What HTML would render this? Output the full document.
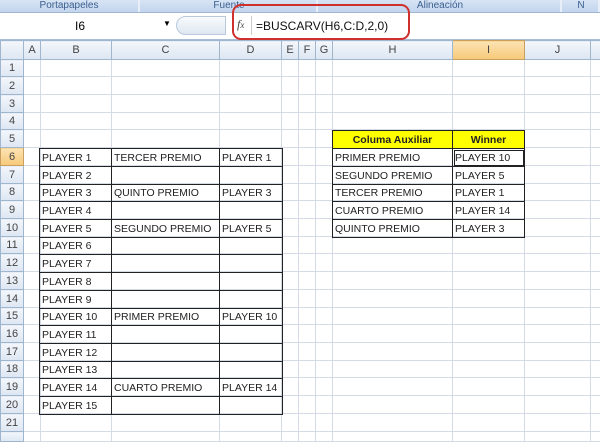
<!DOCTYPE html>
<html><head><style>
*{margin:0;padding:0;box-sizing:border-box}
body{width:600px;height:438px;overflow:hidden;background:#fff;font-family:"Liberation Sans",sans-serif;position:relative}
.rib{position:absolute;left:0;top:0;width:600px;height:13px;background:linear-gradient(#d7e4f4,#c2d5ee);border-bottom:1px solid #9fb5d2}
.grp{position:absolute;top:0;height:12px;font-size:10px;color:#3b5f8f;text-align:center;line-height:11px;border-right:2px solid #e8eff9}
.fb{position:absolute;left:0;top:13px;width:600px;height:27px;background:#fff;border-bottom:1px solid #a8bcd6}
table{border-collapse:collapse;table-layout:fixed;position:absolute}
.g td{border:1px solid #d4dbe7;font-size:11px;padding:0 2px;white-space:nowrap;overflow:hidden}
.g td.h{background:linear-gradient(#f3f6fb,#dde6f2);border-color:#9eb6ce;color:#444;text-align:center;font-size:11px}
.g td.sel{background:linear-gradient(#fbe3b4,#f7c978);border-color:#c9a060}
.t td{border:1px solid #222;font-size:10.5px;padding:0 2px;white-space:nowrap;overflow:hidden;color:#222;line-height:14px}
</style></head><body>
<div class="rib">
<div class="grp" style="left:0;width:140px">Portapapeles</div>
<div class="grp" style="left:142px;width:176px">Fuente</div>
<div class="grp" style="left:320px;width:242px">Alineación</div>
<div class="grp" style="left:564px;width:36px">N</div>
</div>
<div class="fb">
<div style="position:absolute;left:75px;top:6px;font-size:12px">I6</div>
<div style="position:absolute;left:163px;top:6px;font-size:8px">▼</div>
<div style="position:absolute;left:176px;top:3px;width:50px;height:19px;border:1px solid #b8c8dc;border-radius:10px 0 0 10px;background:linear-gradient(#f8fafd,#dfe7f1)"></div>
<div style="position:absolute;left:237px;top:4px;font-size:12px;font-style:italic;font-family:'Liberation Serif',serif;color:#444">f<span style="font-size:9px">x</span></div>
<div style="position:absolute;left:251px;top:3px;width:1px;height:19px;background:#ccc"></div>
<div style="position:absolute;left:256px;top:6px;font-size:12px;color:#111">=BUSCARV(H6,C:D,2,0)</div>
</div>
<div style="position:absolute;left:232px;top:4px;width:178px;height:36px;border:2px solid #d0302c;border-radius:9px"></div>

<table class="g" style="left:0;top:40px;width:600px">
<colgroup><col style="width:23px"><col style="width:17px"><col style="width:71px"><col style="width:108px"><col style="width:62px"><col style="width:17px"><col style="width:17px"><col style="width:17px"><col style="width:120px"><col style="width:72px"><col style="width:66px"><col style="width:10px"></colgroup>
<tr style="height:19px"><td class="h"></td><td class="h">A</td><td class="h">B</td><td class="h">C</td><td class="h">D</td><td class="h">E</td><td class="h">F</td><td class="h">G</td><td class="h">H</td><td class="h sel">I</td><td class="h">J</td><td class="h"></td></tr>
<tr style="height:17px"><td class="h">1</td><td></td><td></td><td></td><td></td><td></td><td></td><td></td><td></td><td></td><td></td><td></td></tr>
<tr style="height:18px"><td class="h">2</td><td></td><td></td><td></td><td></td><td></td><td></td><td></td><td></td><td></td><td></td><td></td></tr>
<tr style="height:18px"><td class="h">3</td><td></td><td></td><td></td><td></td><td></td><td></td><td></td><td></td><td></td><td></td><td></td></tr>
<tr style="height:17px"><td class="h">4</td><td></td><td></td><td></td><td></td><td></td><td></td><td></td><td></td><td></td><td></td><td></td></tr>
<tr style="height:18px"><td class="h">5</td><td></td><td></td><td></td><td></td><td></td><td></td><td></td><td></td><td></td><td></td><td></td></tr>
<tr style="height:18px"><td class="h sel">6</td><td></td><td></td><td></td><td></td><td></td><td></td><td></td><td></td><td></td><td></td><td></td></tr>
<tr style="height:18px"><td class="h">7</td><td></td><td></td><td></td><td></td><td></td><td></td><td></td><td></td><td></td><td></td><td></td></tr>
<tr style="height:17px"><td class="h">8</td><td></td><td></td><td></td><td></td><td></td><td></td><td></td><td></td><td></td><td></td><td></td></tr>
<tr style="height:18px"><td class="h">9</td><td></td><td></td><td></td><td></td><td></td><td></td><td></td><td></td><td></td><td></td><td></td></tr>
<tr style="height:18px"><td class="h">10</td><td></td><td></td><td></td><td></td><td></td><td></td><td></td><td></td><td></td><td></td><td></td></tr>
<tr style="height:17px"><td class="h">11</td><td></td><td></td><td></td><td></td><td></td><td></td><td></td><td></td><td></td><td></td><td></td></tr>
<tr style="height:18px"><td class="h">12</td><td></td><td></td><td></td><td></td><td></td><td></td><td></td><td></td><td></td><td></td><td></td></tr>
<tr style="height:18px"><td class="h">13</td><td></td><td></td><td></td><td></td><td></td><td></td><td></td><td></td><td></td><td></td><td></td></tr>
<tr style="height:18px"><td class="h">14</td><td></td><td></td><td></td><td></td><td></td><td></td><td></td><td></td><td></td><td></td><td></td></tr>
<tr style="height:17px"><td class="h">15</td><td></td><td></td><td></td><td></td><td></td><td></td><td></td><td></td><td></td><td></td><td></td></tr>
<tr style="height:18px"><td class="h">16</td><td></td><td></td><td></td><td></td><td></td><td></td><td></td><td></td><td></td><td></td><td></td></tr>
<tr style="height:18px"><td class="h">17</td><td></td><td></td><td></td><td></td><td></td><td></td><td></td><td></td><td></td><td></td><td></td></tr>
<tr style="height:17px"><td class="h">18</td><td></td><td></td><td></td><td></td><td></td><td></td><td></td><td></td><td></td><td></td><td></td></tr>
<tr style="height:18px"><td class="h">19</td><td></td><td></td><td></td><td></td><td></td><td></td><td></td><td></td><td></td><td></td><td></td></tr>
<tr style="height:18px"><td class="h">20</td><td></td><td></td><td></td><td></td><td></td><td></td><td></td><td></td><td></td><td></td><td></td></tr>
<tr style="height:18px"><td class="h">21</td><td></td><td></td><td></td><td></td><td></td><td></td><td></td><td></td><td></td><td></td><td></td></tr>
<tr style="height:10px"><td class="h"></td><td></td><td></td><td></td><td></td><td></td><td></td><td></td><td></td><td></td><td></td><td></td></tr>
</table>

<table class="t" style="left:39px;top:148px;width:243px">
<colgroup><col style="width:72px"><col style="width:108px"><col style="width:63px"></colgroup>
<tr style="height:18px"><td>PLAYER 1</td><td>TERCER PREMIO</td><td>PLAYER 1</td></tr>
<tr style="height:18px"><td>PLAYER 2</td><td></td><td></td></tr>
<tr style="height:17px"><td>PLAYER 3</td><td>QUINTO PREMIO</td><td>PLAYER 3</td></tr>
<tr style="height:18px"><td>PLAYER 4</td><td></td><td></td></tr>
<tr style="height:18px"><td>PLAYER 5</td><td>SEGUNDO PREMIO</td><td>PLAYER 5</td></tr>
<tr style="height:17px"><td>PLAYER 6</td><td></td><td></td></tr>
<tr style="height:18px"><td>PLAYER 7</td><td></td><td></td></tr>
<tr style="height:18px"><td>PLAYER 8</td><td></td><td></td></tr>
<tr style="height:18px"><td>PLAYER 9</td><td></td><td></td></tr>
<tr style="height:17px"><td>PLAYER 10</td><td>PRIMER PREMIO</td><td>PLAYER 10</td></tr>
<tr style="height:18px"><td>PLAYER 11</td><td></td><td></td></tr>
<tr style="height:18px"><td>PLAYER 12</td><td></td><td></td></tr>
<tr style="height:17px"><td>PLAYER 13</td><td></td><td></td></tr>
<tr style="height:18px"><td>PLAYER 14</td><td>CUARTO PREMIO</td><td>PLAYER 14</td></tr>
<tr style="height:18px"><td>PLAYER 15</td><td></td><td></td></tr>
</table>

<table class="t" style="left:332px;top:130px;width:192px">
<colgroup><col style="width:120px"><col style="width:72px"></colgroup>
<tr style="height:18px;background:#ffff00;font-weight:bold"><td style="text-align:center;font-weight:bold">Columa Auxiliar</td><td style="text-align:center;font-weight:bold">Winner</td></tr>
<tr style="height:18px"><td>PRIMER PREMIO</td><td style="outline:1px solid #222;outline-offset:-2px">PLAYER 10</td></tr>
<tr style="height:18px"><td>SEGUNDO PREMIO</td><td>PLAYER 5</td></tr>
<tr style="height:17px"><td>TERCER PREMIO</td><td>PLAYER 1</td></tr>
<tr style="height:18px"><td>CUARTO PREMIO</td><td>PLAYER 14</td></tr>
<tr style="height:18px"><td>QUINTO PREMIO</td><td>PLAYER 3</td></tr>
</table>
</body></html>
